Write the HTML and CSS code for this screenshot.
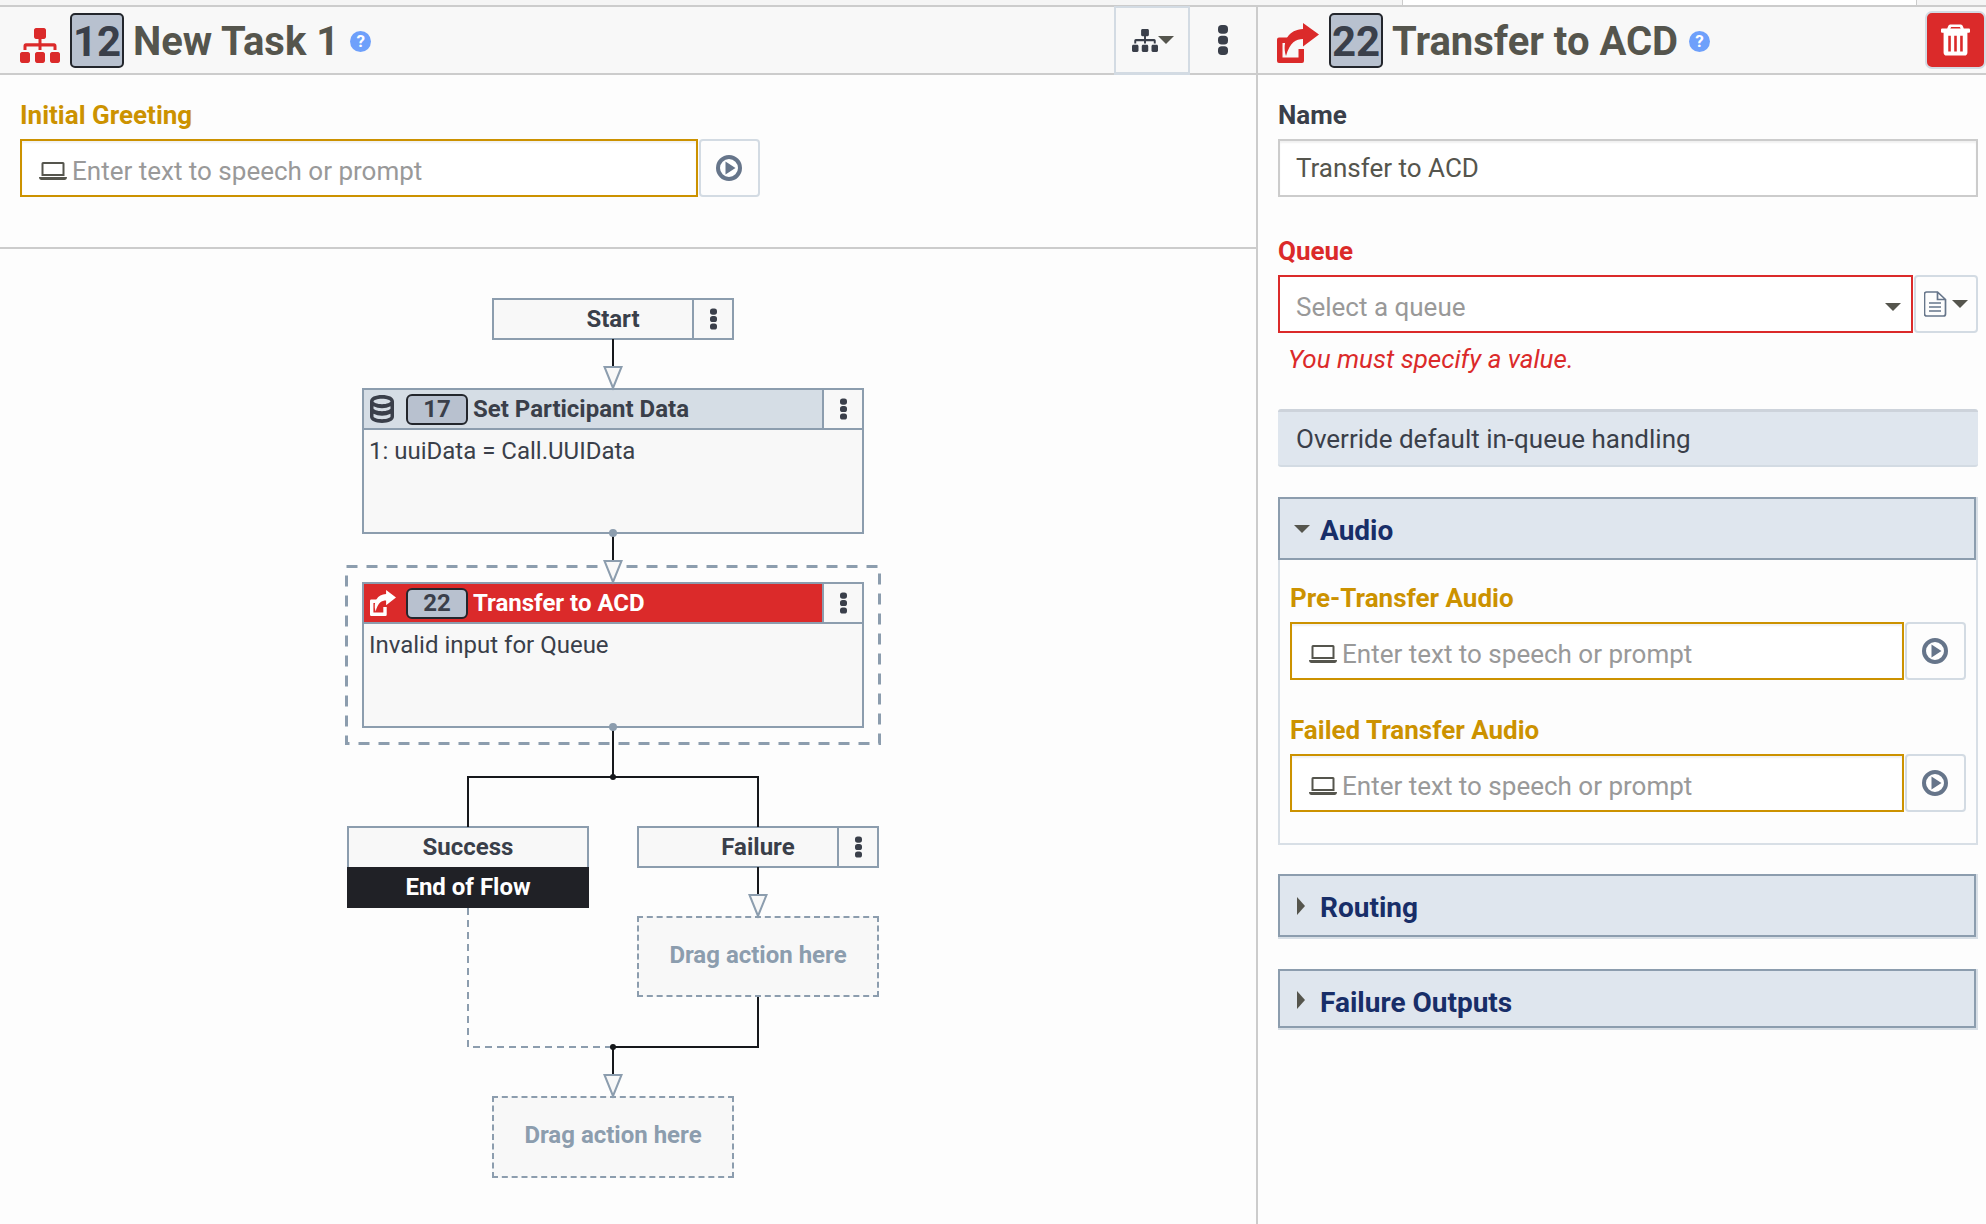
FILE: index.html
```html
<!DOCTYPE html>
<html lang="en">
<head>
  <meta charset="UTF-8" />
  <title>Flow Editor</title>
  <link rel="stylesheet" href="styles.css">
</head>
<body>

  <!-- Icon set -->
  <svg class="icon-defs" aria-hidden="true">
    <symbol id="i-sitemap" viewBox="0 0 640 512" preserveAspectRatio="none">
      <path d="M128 352H32c-17.67 0-32 14.33-32 32v96c0 17.67 14.33 32 32 32h96c17.67 0 32-14.33 32-32v-96c0-17.67-14.33-32-32-32zm-24-80h192v48h48v-48h192v48h48v-57.59c0-21.17-17.23-38.41-38.41-38.41H344v-64h40c17.67 0 32-14.33 32-32V32c0-17.67-14.33-32-32-32H256c-17.67 0-32 14.33-32 32v96c0 17.67 14.33 32 32 32h40v64H94.41C73.23 224 56 241.23 56 262.41V320h48v-48zm264 80h-96c-17.67 0-32 14.33-32 32v96c0 17.67 14.33 32 32 32h96c17.67 0 32-14.33 32-32v-96c0-17.67-14.33-32-32-32zm240 0h-96c-17.67 0-32 14.33-32 32v96c0 17.67 14.33 32 32 32h96c17.67 0 32-14.33 32-32v-96c0-17.67-14.33-32-32-32z"/>
    </symbol>
    <symbol id="i-share" viewBox="0 0 42 40" preserveAspectRatio="none">
      <path d="M14 14.500H2q-2 0-2 2V38q0 2 2 2H25q2 0 2-2V26h-5.500v8.500H5.500V20H9z"/>
      <path d="M26 0L42 11.500 26 23.500V16C19 16 13 19 9 33 4.500 18 12 6.500 26 6z"/>
    </symbol>
    <symbol id="i-database" viewBox="0 0 24 26" preserveAspectRatio="none">
      <path d="M12 0C5.500 0 0 2 0 6v14c0 4 5.500 6 12 6s12-2 12-6V6c0-4-5.500-6-12-6zm0 3.500c5 0 8.500 1.500 8.500 2.500S17 8.500 12 8.500 3.500 7 3.500 6 7 3.500 12 3.500zM3.500 10.500C6 11.700 9 12.200 12 12.200s6-.5 8.500-1.700V12.500c0 1-3.500 2.500-8.500 2.500s-8.500-1.500-8.500-2.500zm0 7C6 18.700 9 19.200 12 19.200s6-.5 8.500-1.700V20c0 1-3.500 2.500-8.500 2.500S3.500 21 3.500 20z" fill-rule="evenodd"/>
    </symbol>
    <symbol id="i-kebab" viewBox="0 0 8 24">
      <rect x="0" y="0" width="8" height="7" rx="3"/>
      <rect x="0" y="8.500" width="8" height="7" rx="3"/>
      <rect x="0" y="17" width="8" height="7" rx="3"/>
    </symbol>
    <symbol id="i-laptop" viewBox="0 0 28 18">
      <path d="M4 0h20a1.500 1.500 0 0 1 1.500 1.500V14h-23V1.500A1.500 1.500 0 0 1 4 0zm.5 2v10h19V2zM0 15h28c0 1.700-1 3-2.500 3h-23C1 18 0 16.700 0 15z" fill-rule="evenodd"/>
    </symbol>
    <symbol id="i-play" viewBox="0 0 26 26">
      <circle cx="13" cy="13" r="11" fill="#fff" stroke="#66758a" stroke-width="4"/>
      <path d="M9.500 6.500v13l10-6.500z" fill="#66758a"/>
    </symbol>
    <symbol id="i-file" viewBox="0 0 23 26">
      <path d="M2.500 1h11L21.500 8.500V23a2 2 0 0 1-2 2h-17a2 2 0 0 1-2-2V3a2 2 0 0 1 2-2zM13.500 1v7.500h8M5 12h12M5 16h12M5 20h12" fill="none" stroke="#66758a" stroke-width="1.700"/>
    </symbol>
    <symbol id="i-trash" viewBox="0 0 28 30">
      <path d="M9 0h10a2 2 0 0 1 2 1.500L22 4h5a1 1 0 0 1 1 1v2a1 1 0 0 1-1 1h-1.500v19a3 3 0 0 1-3 3h-17a3 3 0 0 1-3-3V8H1a1 1 0 0 1-1-1V5a1 1 0 0 1 1-1h5l1-2.500A2 2 0 0 1 9 0zM9.800 2.500L9 4h10l-.8-1.500zM7 11v15h2.500V11zM12.750 11v15h2.500V11zM18.500 11v15H21V11z" fill-rule="evenodd"/>
    </symbol>
  </svg>

  <div class="top-strip"><div class="top-tab"></div></div>

  <div class="workspace">

    <!-- Task editor -->
    <div class="task-pane">
      <div class="pane-header">
        <svg class="header-icon icon-red"><use href="#i-sitemap"/></svg>
        <span class="header-badge">12</span>
        <span class="header-title">New Task 1</span>
        <span class="help-dot">?</span>
        <div class="tree-btn">
          <svg class="tree-icon"><use href="#i-sitemap"/></svg>
          <span class="caret caret-down"></span>
        </div>
        <div class="menu-btn"><svg class="kebab-large"><use href="#i-kebab"/></svg></div>
      </div>

      <div class="greeting">
        <div class="field-label label-gold">Initial Greeting</div>
        <div class="prompt-row prompt-row-wide">
          <div class="prompt-input">
            <svg class="laptop"><use href="#i-laptop"/></svg>
            <span>Enter text to speech or prompt</span>
          </div>
          <div class="play-btn"><svg class="play"><use href="#i-play"/></svg></div>
        </div>
      </div>

      <!-- Flow diagram -->
      <div class="canvas">
        <div class="node node-plain start-node">
          <span class="plain-title">Start</span>
          <div class="node-menu"><svg class="kebab"><use href="#i-kebab"/></svg></div>
        </div>

        <div class="node action-node set-node">
          <div class="action-head">
            <svg class="action-icon"><use href="#i-database"/></svg>
            <span class="action-badge">17</span>
            <span class="action-title">Set Participant Data</span>
            <div class="action-menu"><svg class="kebab"><use href="#i-kebab"/></svg></div>
          </div>
          <div class="action-body">1: uuiData = Call.UUIData</div>
        </div>

        <div class="node action-node transfer-node">
          <div class="action-head head-error">
            <svg class="action-icon icon-share"><use href="#i-share"/></svg>
            <span class="action-badge">22</span>
            <span class="action-title">Transfer to ACD</span>
            <div class="action-menu"><svg class="kebab"><use href="#i-kebab"/></svg></div>
          </div>
          <div class="action-body">Invalid input for Queue</div>
        </div>

        <div class="node success-node">
          <div class="success-title">Success</div>
          <div class="end-flow">End of Flow</div>
        </div>

        <div class="node node-plain failure-node">
          <span class="plain-title">Failure</span>
          <div class="node-menu"><svg class="kebab"><use href="#i-kebab"/></svg></div>
        </div>

        <div class="node drop-zone drop-failure">Drag action here</div>
        <div class="node drop-zone drop-end">Drag action here</div>

        <svg class="wires" width="1256" height="975" viewBox="0 0 1256 975">
          <rect class="wire-selected" x="346.500" y="317.500" width="533" height="177"/>
          <path class="wire" d="M613 90V118M613 284V312M613 478V528M468 578V528H758V578M758 618V646M758 748V798H613V826"/>
          <path class="wire-dashed" d="M468 659V798H613"/>
          <path class="arrow" d="M604.500 118H621.500L613 139zM604.500 312H621.500L613 333zM749.500 646H766.500L758 667zM604.500 826H621.500L613 847z"/>
          <circle class="port" cx="613" cy="284" r="4"/>
          <circle class="port" cx="613" cy="478" r="4"/>
          <circle class="joint" cx="613" cy="528" r="3"/>
          <circle class="joint" cx="613" cy="798" r="3"/>
        </svg>
      </div>
    </div>

    <!-- Action properties -->
    <div class="props-pane">
      <div class="pane-header">
        <svg class="header-icon header-share icon-red"><use href="#i-share"/></svg>
        <span class="header-badge">22</span>
        <span class="header-title">Transfer to ACD</span>
        <span class="help-dot">?</span>
        <div class="delete-btn"><svg class="trash"><use href="#i-trash"/></svg></div>
      </div>

      <div class="props-form">
        <div class="field-label">Name</div>
        <div class="text-input">Transfer to ACD</div>

        <div class="field-label label-red label-queue">Queue</div>
        <div class="select-row">
          <div class="select-input">
            <span>Select a queue</span>
            <span class="caret caret-down"></span>
          </div>
          <div class="file-btn">
            <svg class="file"><use href="#i-file"/></svg>
            <span class="caret caret-down"></span>
          </div>
        </div>
        <div class="field-error">You must specify a value.</div>

        <div class="toggle-btn">Override default in-queue handling</div>

        <div class="section section-audio">
          <div class="section-head">
            <span class="caret caret-down"></span>
            <span class="section-title">Audio</span>
          </div>
          <div class="section-body">
            <div class="field-label label-gold">Pre-Transfer Audio</div>
            <div class="prompt-row">
              <div class="prompt-input">
                <svg class="laptop"><use href="#i-laptop"/></svg>
                <span>Enter text to speech or prompt</span>
              </div>
              <div class="play-btn"><svg class="play"><use href="#i-play"/></svg></div>
            </div>
            <div class="field-label label-gold label-next">Failed Transfer Audio</div>
            <div class="prompt-row">
              <div class="prompt-input">
                <svg class="laptop"><use href="#i-laptop"/></svg>
                <span>Enter text to speech or prompt</span>
              </div>
              <div class="play-btn"><svg class="play"><use href="#i-play"/></svg></div>
            </div>
          </div>
        </div>

        <div class="section section-closed section-routing">
          <div class="section-head">
            <span class="caret caret-right"></span>
            <span class="section-title">Routing</span>
          </div>
        </div>

        <div class="section section-closed section-outputs">
          <div class="section-head">
            <span class="caret caret-right"></span>
            <span class="section-title">Failure Outputs</span>
          </div>
        </div>
      </div>
    </div>
  </div>

</body>
</html>
```

FILE: styles.css
```css
* {
  margin: 0;
  padding: 0;
  box-sizing: border-box;
}

body {
  font-family: Roboto, "Liberation Sans", sans-serif;
  background-color: #fdfdfd;
  color: #3a3f4a;
  height: 100vh;
  overflow: hidden;
  font-size: 26px;
}

.icon-defs {
  display: none;
}

.top-strip {
  height: 5px;
  background: #f5f5f5;
  display: flex;
  justify-content: flex-end;
  padding-right: 69px;
}

.top-tab {
  width: 515px;
  background: #fff;
  border-left: 1px solid #ccc;
  border-right: 1px solid #ccc;
}

.workspace {
  display: flex;
  height: calc(100vh - 5px);
}

.task-pane {
  width: 1258px;
  border-right: 2px solid #ccc;
  display: flex;
  flex-direction: column;
}

.props-pane {
  flex: 1;
  min-width: 0;
}

/* Pane headers */
.pane-header {
  height: 70px;
  display: flex;
  align-items: center;
  padding-left: 20px;
  background: #f8f8f8;
  border-top: 2px solid #ccc;
  border-bottom: 2px solid #ccc;
}

.header-icon {
  width: 40px;
  height: 35px;
  margin-top: 11px;
  flex: none;
}

.header-share {
  width: 42px;
  height: 40px;
  margin-top: 6px;
  margin-left: -1px;
}

.icon-red {
  fill: #db2a2a;
}

.header-badge {
  width: 54px;
  height: 55px;
  margin-left: 10px;
  background: #b8c1cf;
  border: 2px solid #23262c;
  border-radius: 5px;
  font-size: 42px;
  font-weight: 700;
  line-height: 53px;
  text-align: center;
  color: #3a3f4a;
}

.header-title {
  margin-left: 9px;
  padding-top: 3px;
  font-size: 40px;
  font-weight: 700;
  color: #55554d;
}

.help-dot {
  width: 21px;
  height: 21px;
  margin-left: 11px;
  margin-top: 3px;
  border-radius: 50%;
  background: #6ea0fb;
  color: #fff;
  font-size: 17px;
  font-weight: 700;
  line-height: 21px;
  text-align: center;
}

.tree-btn {
  margin-left: auto;
  width: 76px;
  height: 69px;
  margin-top: 1px;
  border: 2px solid #d3dbe3;
  border-bottom-width: 3px;
  display: flex;
  align-items: center;
  justify-content: center;
  padding-left: 1px;
}

.tree-icon {
  width: 26px;
  height: 23px;
  fill: #3a3f4a;
}

.menu-btn {
  width: 66px;
  display: flex;
  justify-content: center;
}

.kebab-large {
  width: 10px;
  height: 32px;
  fill: #3a3f4a;
}

.delete-btn {
  margin-left: auto;
  width: 61px;
  height: 58px;
  background: #db2a2a;
  border: 2px solid #d3dbe3;
  border-radius: 7px;
  display: flex;
  align-items: center;
  justify-content: center;
}

.trash {
  width: 29px;
  height: 32px;
  fill: #fff;
}

/* Carets */
.caret {
  display: inline-block;
  flex: none;
  width: 0;
  height: 0;
}

.caret-down {
  border-left: 8px solid transparent;
  border-right: 8px solid transparent;
  border-top: 8px solid #55554d;
}

.caret-right {
  border-top: 9px solid transparent;
  border-bottom: 9px solid transparent;
  border-left: 8px solid #55554d;
}

/* Form fields */
.greeting {
  height: 174px;
  padding: 23px 0 0 20px;
  border-bottom: 2px solid #ccc;
  flex: none;
}

.field-label {
  font-weight: 700;
  line-height: 34px;
  margin-bottom: 7px;
}

.label-gold {
  color: #cc9200;
}

.label-red {
  color: #db2a2a;
}

.label-queue {
  margin-top: 37px;
}

.label-next {
  margin-top: 33px;
}

.prompt-row {
  display: flex;
  height: 58px;
  width: 676px;
  gap: 1px;
}

.prompt-row-wide {
  width: 740px;
}

.prompt-input {
  flex: 1;
  display: flex;
  align-items: center;
  gap: 5px;
  padding: 6px 0 0 17px;
  border: 2px solid #cc9200;
  background: #fff;
  box-shadow: inset 0 2px 2px rgba(0, 0, 0, 0.06);
  color: #999;
}

.laptop {
  width: 28px;
  height: 18px;
  fill: #55554d;
  flex: none;
}

.play-btn {
  width: 61px;
  flex: none;
  border: 2px solid #d3dbe3;
  border-radius: 4px;
  display: flex;
  align-items: center;
  justify-content: center;
  padding-right: 1px;
  background: #fdfdfd;
}

.play {
  width: 26px;
  height: 26px;
}

.props-form {
  padding: 23px 8px 0 20px;
}

.text-input {
  height: 58px;
  line-height: 54px;
  padding-left: 16px;
  border: 2px solid #ccc;
  background: #fff;
  box-shadow: inset 0 2px 2px rgba(0, 0, 0, 0.06);
  color: #55554d;
}

.select-row {
  display: flex;
  height: 58px;
  gap: 1px;
}

.select-input {
  flex: 1;
  display: flex;
  align-items: center;
  justify-content: space-between;
  padding: 6px 10px 0 16px;
  border: 2px solid #db2a2a;
  background: #fff;
  color: #999;
}

.file-btn {
  width: 64px;
  flex: none;
  display: flex;
  align-items: center;
  gap: 5px;
  padding-left: 8px;
  border: 2px solid #d3dbe3;
  border-radius: 4px;
}

.file {
  width: 23px;
  height: 26px;
  flex: none;
}

.field-error {
  margin: 9px 0 33px;
  padding-left: 10px;
  line-height: 34px;
  font-style: italic;
  color: #db2a2a;
}

.toggle-btn {
  height: 58px;
  line-height: 54px;
  padding-left: 18px;
  background: #dfe6ee;
  border-top: 3px solid #cdd3db;
  border-bottom: 2px solid #d3dbe3;
  border-radius: 3px;
}

/* Collapsible sections */
.section {
  border-right: 2px solid #d8dfe6;
  border-bottom: 2px solid #d8dfe6;
}

.section-audio {
  margin-top: 30px;
  height: 348px;
}

.section-routing {
  margin-top: 29px;
}

.section-outputs {
  margin-top: 30px;
}

.section-head {
  height: 63px;
  display: flex;
  align-items: center;
  padding-left: 14px;
  background: #dfe6ee;
  border: 2px solid #8c9dae;
}

.section-outputs .section-head {
  height: 59px;
}

.section-closed .caret {
  margin-left: 3px;
  margin-right: 5px;
}

.section-outputs .caret {
  margin-top: 3px;
}

.section-title {
  margin-left: 10px;
  padding-top: 3px;
  font-size: 28px;
  font-weight: 700;
  color: #182e68;
}

.section-outputs .section-title {
  padding-top: 8px;
}

.section-body {
  height: 283px;
  padding: 21px 0 0 10px;
  border-left: 2px solid #d8dfe6;
}

/* Flow diagram */
.canvas {
  position: relative;
  flex: 1;
}

.wires {
  position: absolute;
  left: 0;
  top: 0;
  pointer-events: none;
}

.wire {
  fill: none;
  stroke: #16181c;
  stroke-width: 2;
}

.wire-dashed {
  fill: none;
  stroke: #8c9dae;
  stroke-width: 2;
  stroke-dasharray: 7 5;
}

.wire-selected {
  fill: none;
  stroke: #8c9dae;
  stroke-width: 3;
  stroke-dasharray: 11 9;
}

.arrow {
  fill: #f8f8f8;
  stroke: #8c9dae;
  stroke-width: 2;
}

.port {
  fill: #8c9dae;
}

.joint {
  fill: #16181c;
}

.node {
  position: absolute;
  font-size: 24px;
}

.node-plain {
  width: 242px;
  background: #f8f8f8;
  border: 2px solid #8c9dae;
  text-align: center;
  line-height: 38px;
}

.plain-title {
  font-weight: 700;
}

.node-menu {
  position: absolute;
  right: 0;
  top: 0;
  bottom: 0;
  width: 40px;
  border-left: 2px solid #8c9dae;
  display: flex;
  align-items: center;
  justify-content: center;
}

.kebab {
  width: 7px;
  height: 22px;
  fill: #3a3f4a;
}

.start-node {
  left: 492px;
  top: 49px;
  height: 42px;
}

.failure-node {
  left: 637px;
  top: 577px;
  height: 42px;
}

.action-node {
  left: 362px;
  width: 502px;
  height: 146px;
  background: #f8f8f8;
  border: 2px solid #8c9dae;
}

.set-node {
  top: 139px;
}

.transfer-node {
  top: 333px;
}

.action-head {
  height: 40px;
  display: flex;
  align-items: center;
  background: #d5dde5;
  border-bottom: 2px solid #8c9dae;
  padding-left: 6px;
}

.head-error {
  background: #db2a2a;
  color: #fff;
}

.action-icon {
  width: 24px;
  height: 28px;
  fill: #3a3f4a;
  flex: none;
}

.icon-share {
  width: 26px;
  height: 26px;
  margin-right: -2px;
  fill: #fff;
}

.action-badge {
  width: 62px;
  height: 31px;
  margin-left: 12px;
  background: #b8c1cf;
  border: 2px solid #23262c;
  border-radius: 6px;
  text-align: center;
  line-height: 27px;
  font-weight: 700;
  color: #3a3f4a;
}

.action-title {
  margin-left: 5px;
  font-weight: 700;
}

.action-menu {
  margin-left: auto;
  width: 40px;
  height: 38px;
  background: #f8f8f8;
  border-left: 2px solid #8c9dae;
  display: flex;
  align-items: center;
  justify-content: center;
}

.action-body {
  padding: 4px 0 0 5px;
  line-height: 34px;
}

.success-node {
  left: 347px;
  top: 577px;
  width: 242px;
  text-align: center;
  font-weight: 700;
}

.success-title {
  height: 41px;
  line-height: 38px;
  background: #f8f8f8;
  border: 2px solid #8c9dae;
  border-bottom: none;
}

.end-flow {
  height: 41px;
  line-height: 40px;
  background: #202126;
  color: #fff;
}

.drop-zone {
  background: #f8f8f8;
  border: 2px dashed #8c9dae;
  color: #8c9dae;
  font-weight: 700;
  text-align: center;
  line-height: 74px;
}

.drop-failure {
  left: 637px;
  top: 667px;
  width: 242px;
  height: 81px;
}

.drop-end {
  left: 492px;
  top: 847px;
  width: 242px;
  height: 82px;
}
```
